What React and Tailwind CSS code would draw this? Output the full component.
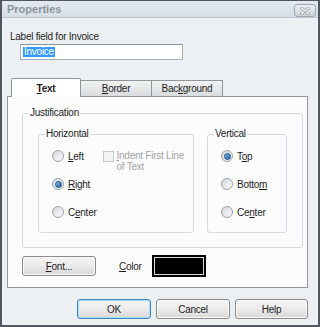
import React from 'react';

const font = { fontFamily: '"Liberation Sans", Arial, sans-serif' };

const Radio = ({ checked }) => (
  <span className="flex h-[12px] w-[12px] shrink-0 items-center justify-center rounded-full border border-[#9aa1a8] bg-gradient-to-br from-[#d4d8dc] to-[#fbfbfb]">
    {checked && (
      <span className="h-[7px] w-[7px] rounded-full border border-[#1b4f86] bg-gradient-to-br from-[#7fc0ee] to-[#1f5fa6]" />
    )}
  </span>
);

const RadioRow = ({ checked, children }) => (
  <div className="flex h-[14px] items-center gap-[4px]">
    <Radio checked={checked} />
    <span className="text-[#1e1e1e]">{children}</span>
  </div>
);

const Group = ({ label, className, children }) => (
  <fieldset className={`min-w-0 rounded-[3px] border border-[#d3dbe1] ${className}`}>
    <legend className="ml-[6px] px-[1px] leading-[12px] text-[#1e1e1e]">{label}</legend>
    {children}
  </fieldset>
);

const Button = ({ children, focused, className = '' }) => (
  <button
    className={`flex h-[20px] items-center justify-center rounded-[3px] border bg-gradient-to-b from-[#f4f4f4] via-[#ebebeb] to-[#d8d8d8] text-[#1e1e1e] ${
      focused ? 'border-[#3a87c4] shadow-[inset_0_0_0_1px_#a9dcf6]' : 'border-[#8a8a8a] shadow-[inset_0_0_0_1px_#fbfbfb]'
    } ${className}`}
  >
    {children}
  </button>
);

export default function App() {
  return (
    <div
      style={font}
      className="flex h-[327px] w-[320px] flex-col border-x-2 border-b-2 border-t border-[#50575e] bg-[#edf0f3] text-[10px] tracking-[-0.25px]"
    >
      {/* title bar */}
      <div className="flex h-[17px] shrink-0 items-center justify-between border-b border-[#bcc5ce] bg-gradient-to-b from-[#e3e9ef] to-[#d6dee6] pl-[5px] pr-[2px]">
        <span className="text-[11px] font-bold tracking-normal text-[#8a949d]">Properties</span>
        <div className="mt-[3px] flex h-[13px] w-[22px] items-center justify-center rounded-[3px] border border-[#9fa8b1] bg-gradient-to-b from-[#eef1f4] to-[#cbd2d9]">
          <svg width="10" height="8" viewBox="0 0 10 8">
            <path d="M1.5 1 L8.5 7 M8.5 1 L1.5 7" stroke="#8a939b" strokeWidth="2.6" strokeLinecap="round" />
            <path d="M1.5 1 L8.5 7 M8.5 1 L1.5 7" stroke="#ffffff" strokeWidth="1.2" strokeLinecap="round" />
          </svg>
        </div>
      </div>

      {/* label field */}
      <div className="ml-[8px] mt-[13px] leading-[12px] text-[#1e1e1e]">Label field for Invoice</div>
      <div className="ml-[18px] mt-[1px] flex h-[16px] w-[163px] items-center border border-[#a7aeb6] border-t-[#8b939b] bg-white pl-[2px]">
        <span className="bg-[#3399ff] px-[1px] leading-[10px] text-white">Invoice</span>
      </div>

      {/* tabs */}
      <div className="relative z-10 -mb-[1px] ml-[9px] mt-[18px] flex items-end">
        <div className="flex h-[19px] w-[70px] items-center justify-center rounded-t-[2px] border border-b-0 border-[#8e969e] bg-white font-bold text-[#1e1e1e]">
          <span><u>T</u>ext</span>
        </div>
        <div className="flex h-[17px] w-[71px] items-center justify-center border border-l-0 border-[#8e969e] bg-gradient-to-b from-[#f3f3f3] to-[#d9dcdf] text-[#1e1e1e]">
          <span><u>B</u>order</span>
        </div>
        <div className="flex h-[17px] w-[71px] items-center justify-center border border-l-0 border-[#8e969e] bg-gradient-to-b from-[#f3f3f3] to-[#d9dcdf] text-[#1e1e1e]">
          <span>Bac<u>k</u>ground</span>
        </div>
      </div>

      {/* tab panel */}
      <div className="ml-[5px] flex h-[192px] w-[301px] flex-col border border-[#8e969e] bg-[#fcfcfd] pl-[14px] pt-[10px]">
        <Group label="Justification" className="h-[141px] w-[281px]">
          <div className="ml-[15px] mt-[9px] flex gap-[13px]">
            <Group label="Horizontal" className="h-[105px] w-[156px] shrink-0">
              <div className="flex pl-[13px] pt-[9px]">
                <div className="flex flex-col gap-[14px]">
                  <RadioRow><u>L</u>eft</RadioRow>
                  <RadioRow checked><u>R</u>ight</RadioRow>
                  <RadioRow>C<u>e</u>nter</RadioRow>
                </div>
                <div className="ml-[6px] flex items-start gap-[3px] whitespace-nowrap leading-[11px] text-[#a3a3a3]">
                  <span className="mt-[2px] h-[11px] w-[11px] shrink-0 border border-[#c3c8cc] bg-[#f4f5f6]" />
                  <span className="mt-[1px]">
                    <u>I</u>ndent First Line
                    <br />
                    of Text
                  </span>
                </div>
              </div>
            </Group>
            <Group label="Vertical" className="h-[105px] w-[80px] shrink-0">
              <div className="flex flex-col gap-[14px] pl-[13px] pt-[9px]">
                <RadioRow checked>T<u>o</u>p</RadioRow>
                <RadioRow>Botto<u>m</u></RadioRow>
                <RadioRow>Ce<u>n</u>ter</RadioRow>
              </div>
            </Group>
          </div>
        </Group>

        <div className="mt-[7px] flex items-center">
          <Button className="w-[74px]">
            <span><u>F</u>ont...</span>
          </Button>
          <span className="ml-[23px] text-[#1e1e1e]">
            <u>C</u>olor
          </span>
          <div className="ml-[10px] h-[22px] w-[54px] border-2 border-black bg-[#d8d8d8] p-[1px]">
            <div className="h-full w-full bg-black" />
          </div>
        </div>
      </div>

      {/* dialog buttons */}
      <div className="ml-[5px] mt-[11px] flex w-[301px] justify-end gap-[5px]">
        <Button focused className="w-[74px]">OK</Button>
        <Button className="w-[74px]">Cancel</Button>
        <Button className="w-[73px]">Help</Button>
      </div>
    </div>
  );
}
